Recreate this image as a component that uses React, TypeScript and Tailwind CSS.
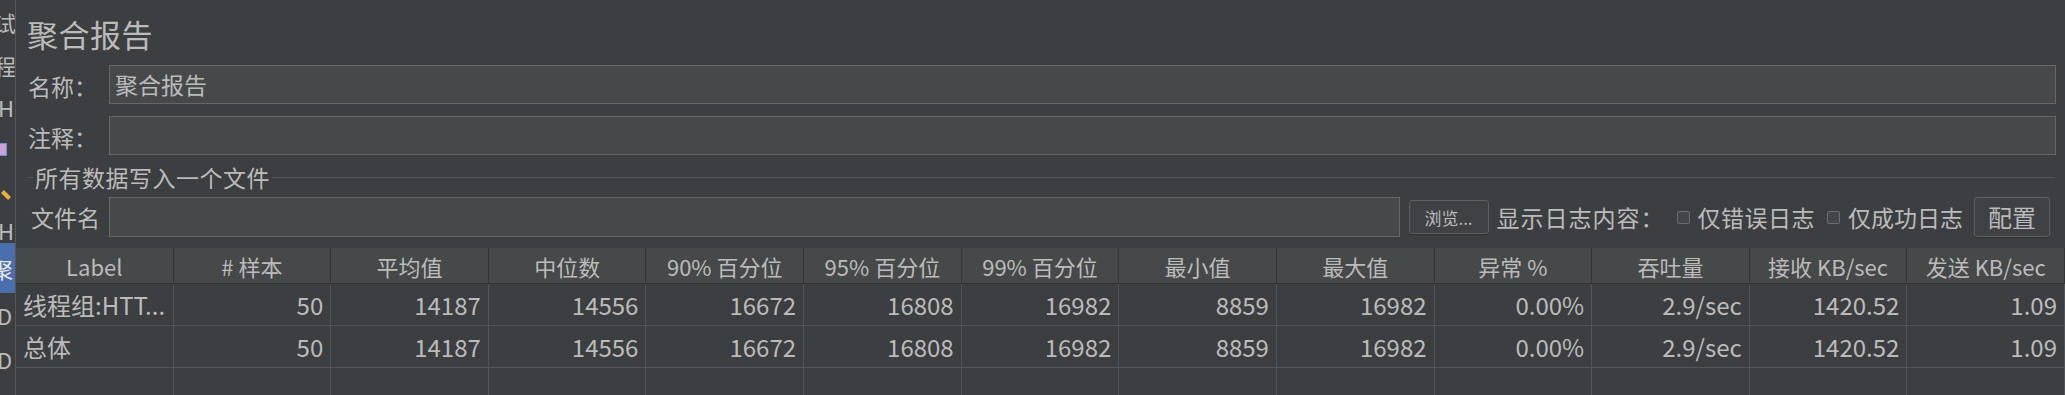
import React from 'react';

const font = "font-['Noto_Sans_CJK_SC','Liberation_Sans',sans-serif]";

const headers = [
  'Label',
  '# 样本',
  '平均值',
  '中位数',
  '90% 百分位',
  '95% 百分位',
  '99% 百分位',
  '最小值',
  '最大值',
  '异常 %',
  '吞吐量',
  '接收 KB/sec',
  '发送 KB/sec',
];

const values = ['50', '14187', '14556', '16672', '16808', '16982', '8859', '16982', '0.00%', '2.9/sec', '1420.52', '1.09'];

const rows = [
  ['线程组:HTT...', ...values],
  ['总体', ...values],
  ['', '', '', '', '', '', '', '', '', '', '', '', ''],
];

// left tree panel, mostly hidden behind the split pane
function TreeStrip() {
  return (
    <div className="w-[15px] shrink-0 overflow-hidden flex flex-col text-[22px] leading-none text-[#bbbbbb]">
      <div className="h-[44px] flex items-center whitespace-nowrap -ml-[6px]">试</div>
      <div className="h-[42px] flex items-center whitespace-nowrap -ml-[6px]">程</div>
      <div className="h-[42px] flex items-center whitespace-nowrap -ml-[2px]">H</div>
      <div className="h-[42px] flex items-center">
        <div className="w-[8px] h-[13px] ml-[-1px] bg-[#c9a3d8] border border-[#6f8fd0]" />
      </div>
      <div className="h-[46px] flex items-center">
        <div className="w-[10px] h-[4px] bg-[#e5b43a] rotate-45 ml-[1px] mt-[4px]" />
      </div>
      <div className="h-[27px] flex items-center whitespace-nowrap -ml-[2px]">H</div>
      <div className="h-[50px] flex items-center bg-[#4b6eaf] whitespace-nowrap">
        <span className="-ml-[9px] text-[#e6e6e6]">聚</span>
      </div>
      <div className="h-[44px] flex items-center whitespace-nowrap -ml-[3px]">D</div>
      <div className="h-[44px] flex items-center whitespace-nowrap -ml-[3px]">D</div>
    </div>
  );
}

function TextInput({ value }: { value?: string }) {
  return (
    <div className="flex-1 h-full bg-[#45494a] border border-[#666868] flex items-center px-[5px] text-[23px] text-[#bbbbbb]">
      {value}
    </div>
  );
}

function Checkbox() {
  return <div className="w-[13px] h-[13px] border border-[#6b6e70] bg-[#43474a] rounded-[2px] shrink-0" />;
}

export default function App() {
  return (
    <div className={`flex w-[2065px] h-[395px] overflow-hidden bg-[#3c3f41] text-[#bbbbbb] ${font}`}>
      <TreeStrip />
      <div className="w-px shrink-0 bg-[#55585a]" />
      <div className="flex-1 min-w-0 flex flex-col">
        <div className="h-[65px] shrink-0 pl-[11px] pt-[18px] text-[31px] leading-none tracking-[0.5px]">聚合报告</div>

        <div className="h-[39px] shrink-0 flex items-center pr-[9px]">
          <div className="w-[93px] shrink-0 pl-[12px] text-[23px] leading-none pt-[4px]">名称：</div>
          <TextInput value="聚合报告" />
        </div>

        <div className="h-[39px] mt-[12px] shrink-0 flex items-center pr-[9px]">
          <div className="w-[93px] shrink-0 pl-[12px] text-[23px] leading-none pt-[4px]">注释：</div>
          <TextInput />
        </div>

        <div className="h-[22px] mt-[11px] shrink-0 flex items-center pl-[12px] pr-[11px]">
          <div className="w-[5px] h-px bg-[#55585a]" />
          <div className="px-[2px] text-[23px] leading-none tracking-[0.5px]">所有数据写入一个文件</div>
          <div className="flex-1 h-px bg-[#55585a]" />
        </div>

        <div className="h-[40px] mt-[9px] shrink-0 flex items-center pr-[15px]">
          <div className="w-[93px] shrink-0 pl-[15px] text-[23px] leading-none">文件名</div>
          <TextInput />
          <button className="ml-[9px] w-[80px] h-[34px] shrink-0 rounded-[3px] border border-[#5e6162] bg-[#3e4244] shadow-[0_1px_0_#2e3032] text-[17px] leading-none text-[#bbbbbb]">
            浏览...
          </button>
          <div className="ml-[8px] text-[23px] leading-none whitespace-nowrap tracking-[1px]">显示日志内容：</div>
          <div className="ml-[12px] flex items-center gap-[8px]">
            <Checkbox />
            <span className="text-[23px] leading-none whitespace-nowrap tracking-[0.5px]">仅错误日志</span>
          </div>
          <div className="ml-[12px] flex items-center gap-[8px]">
            <Checkbox />
            <span className="text-[23px] leading-none whitespace-nowrap">仅成功日志</span>
          </div>
          <button className="ml-[11px] w-[76px] h-[40px] shrink-0 rounded-[3px] border border-[#5e6162] bg-[#3e4244] shadow-[0_1px_0_#2e3032] text-[24px] leading-none text-[#bbbbbb]">
            配置
          </button>
        </div>

        <div className="mt-[11px] grid grid-cols-[repeat(13,minmax(0,1fr))]">
          {headers.map((h) => (
            <div
              key={h}
              className="h-[36px] bg-[#45494a] border-r border-b border-[#323436] flex items-center justify-center text-[22px] leading-none whitespace-nowrap"
            >
              {h}
            </div>
          ))}
          {rows.map((r, ri) =>
            r.map((c, ci) => (
              <div
                key={`${ri}-${ci}`}
                className={`h-[42px] border-r border-b border-[#515557] flex items-center text-[24px] leading-none whitespace-nowrap overflow-hidden ${
                  ci === 0 ? 'justify-start pl-[7px]' : 'justify-end pr-[7px]'
                }`}
              >
                {c}
              </div>
            ))
          )}
        </div>
      </div>
    </div>
  );
}
